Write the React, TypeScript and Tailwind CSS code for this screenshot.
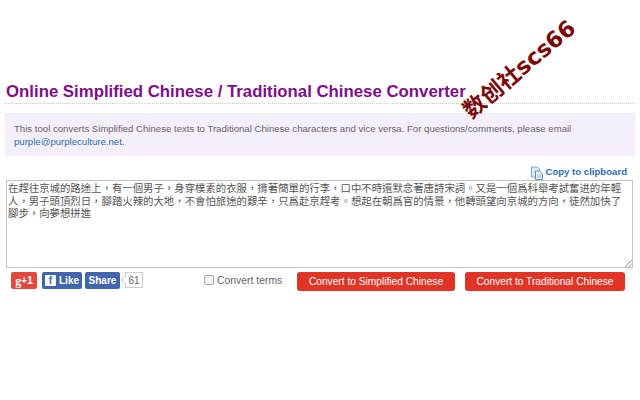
const sample =
  "在趕往京城的路途上，有一個男子，身穿樸素的衣服，揹著簡單的行李，口中不時還默念著唐詩宋詞。又是一個爲科舉考試奮进的年輕人，男子頭頂烈日，腳踏火辣的大地，不會怕旅途的艱辛，只爲赴京趕考。想起在朝爲官的情景，他轉頭望向京城的方向，徒然加快了腳步，向夢想拼進";

const arial = "font-['Liberation_Sans',Arial,sans-serif]";

function CopyIcon() {
  return (
    <svg width="14" height="14" viewBox="0 0 14 14" className="shrink-0">
      <path d="M1.5 1h6l2 2v8h-8z" fill="#dbe8f6" stroke="#7fa6d2" />
      <path d="M5.5 5h4l3 3v5.500h-7z" fill="#eef4fb" stroke="#5d8dc4" />
      <path d="M7 9h4M7 11h4" stroke="#9dbbdc" />
    </svg>
  );
}

export default function App() {
  return (
    <main
      className={`relative h-[400px] w-[640px] overflow-hidden bg-white px-[5px] pt-[82px] ${arial}`}
    >
      <h1 className="border-b border-dotted border-[#cccccc] pb-[1px] pl-px text-[16.8px] leading-[20px] font-bold text-[#7e0f86]">
        Online Simplified Chinese / Traditional Chinese Converter
      </h1>

      <div className="mt-[9px] h-[43px] bg-[#f5effc] px-[9px] pt-[9px] text-[9.6px] leading-[13px] text-[#666666]">
        This tool converts Simplified Chinese texts to Traditional Chinese characters and vice versa. For
        questions/comments, please email <span className="text-[#2a6fa8]">purple@purpleculture.net</span>.
      </div>

      <div className="mt-[9px] flex h-[15px] items-center justify-end gap-[1px] pr-[8px] text-[9.6px] font-bold text-[#2f6fb0]">
        <CopyIcon />
        <span>Copy to clipboard</span>
      </div>

      <div className="relative ml-px h-[88px] w-[627px] border border-[#c4c4c4] pt-[1px] pr-[3px] pl-[1px] font-['Noto_Sans_CJK_TC','Noto_Sans_CJK_SC',sans-serif] text-[10.4px] leading-[12.5px] text-[#555555]">
        {sample}
        <svg width="7" height="7" viewBox="0 0 7 7" className="absolute right-0 bottom-0">
          <path d="M0 7L7 0M3.500 7L7 3.500" stroke="#999999" />
        </svg>
      </div>

      <div className="mt-[4px] flex items-start pl-[6px]">
        <div className="flex h-[17px] w-[26px] items-center justify-center rounded-[2px] bg-[#e2483d] text-[10px] font-bold text-white">
          <span className="font-['Liberation_Serif',serif] text-[12px]">g</span>+1
        </div>
        <div className="ml-[5px] flex h-[17px] w-[40px] items-center gap-[3px] rounded-[2px] bg-[#4266ad] pl-[3px] text-[10px] font-bold text-white">
          <span className="flex h-[11px] w-[11px] items-end justify-center rounded-[1px] bg-white text-[10px] leading-[10px] text-[#4266ad]">
            f
          </span>
          Like
        </div>
        <div className="ml-[3px] flex h-[17px] w-[35px] items-center justify-center rounded-[2px] bg-[#4266ad] text-[10px] font-bold text-white">
          Share
        </div>
        <div className="relative ml-[5px] flex h-[16px] w-[18px] items-center justify-center border border-[#cccccc] bg-white text-[10px] text-[#666666]">
          <span className="absolute top-[4px] -left-[4px] h-[6px] w-[6px] rotate-45 border-b border-l border-[#cccccc] bg-white" />
          61
        </div>

        <div className="ml-[61px] flex w-[77px] items-center gap-[3px] pt-px text-[10.4px] whitespace-nowrap text-[#666666]">
          <span className="mb-[2px] h-[10px] w-[10px] shrink-0 rounded-[2px] border border-[#aaaaaa] bg-[#f2f2f2]" />
          Convert terms
        </div>

        <button className="ml-[16px] h-[19px] w-[158px] rounded-[3px] bg-[#df3426] text-[10.2px] text-white">
          Convert to Simplified Chinese
        </button>
        <button className="ml-[10px] h-[19px] w-[160px] rounded-[3px] bg-[#df3426] text-[10.2px] text-white">
          Convert to Traditional Chinese
        </button>
      </div>

      {/* watermark */}
      <div className="absolute top-[56px] left-[450px] origin-center -rotate-[40deg] font-['DejaVu_Sans','Noto_Sans_CJK_SC',sans-serif] text-[22.400px] leading-[26px] font-bold whitespace-nowrap text-[#7b0606]">
        数创社scs66
      </div>
    </main>
  );
}
